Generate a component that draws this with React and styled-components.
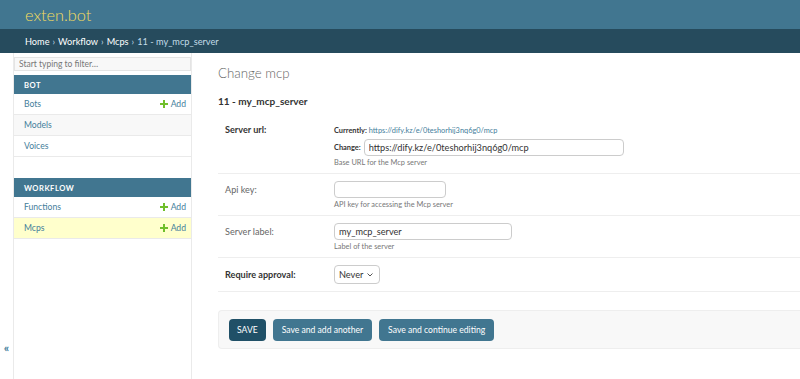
import React from 'react';
import styled, { createGlobalStyle } from 'styled-components';

const GlobalStyle = createGlobalStyle`
  html, body { margin: 0; padding: 0; background: #fff; }
  body {
    font-family: Lato, "Liberation Sans", Arial, sans-serif;
    color: #333;
    font-size: 9.1px;
  }
  * { box-sizing: border-box; }
`;

const Header = styled.header`
  height: 29px;
  background: #417690;
  display: flex;
  align-items: center;
  padding: 0 25px;
`;

const Brand = styled.div`
  font-size: 16.3px;
  font-weight: 300;
  color: #f5dd5d;
`;

const Breadcrumbs = styled.nav`
  height: 24px;
  background: #264b5d;
  display: flex;
  align-items: center;
  gap: 3px;
  padding: 0 25px;
  font-size: 9.2px;
  color: #c4dce8;
`;

const Crumb = styled.a`
  color: #fff;
  text-decoration: none;
`;

const Main = styled.div`
  display: flex;
  min-height: calc(100vh - 53px);
`;

const Toggle = styled.div`
  flex: 0 0 14px;
  border-right: 1px solid #eaeaea;
  display: flex;
  flex-direction: column;
  justify-content: flex-end;
  align-items: center;
  padding-bottom: 24px;
  color: #447e9b;
  font-size: 12px;
  font-weight: bold;
`;

const Sidebar = styled.aside`
  flex: 0 0 178px;
  border-right: 1px solid #eaeaea;
  padding-top: 4px;
`;

const Filter = styled.input`
  display: block;
  width: 100%;
  height: 14px;
  margin: 0 0 4px;
  padding: 0 4px;
  border: 1px solid #e4e4e4;
  background: #f8f8f8;
  font-family: inherit;
  font-size: 8.5px;
  color: #333;
  &::placeholder { color: #777; }
`;

const Module = styled.div`
  margin-bottom: 21px;
`;

const Caption = styled.div`
  height: 19px;
  background: #417690;
  color: #fff;
  display: flex;
  align-items: center;
  padding-left: 10px;
  font-size: 7.6px;
  font-weight: bold;
  letter-spacing: 0.5px;
  text-transform: uppercase;
`;

const NavRow = styled.div`
  height: 21px;
  display: flex;
  align-items: center;
  justify-content: space-between;
  padding: 0 5px 0 10px;
  border-bottom: 1px solid #eaeaea;
  background: ${p => (p.$current ? '#ffffcc' : p.$alt ? '#f8f8f8' : '#fff')};
`;

const NavLink = styled.a`
  color: #447e9b;
  font-size: 8.6px;
  text-decoration: none;
`;

const AddLink = styled.a`
  display: flex;
  align-items: center;
  gap: 3px;
  color: #447e9b;
  font-size: 8.6px;
  text-decoration: none;
`;

const PlusIcon = () => (
  <svg width="8" height="8" viewBox="0 0 8 8" aria-hidden="true">
    <rect x="3" y="0" width="2" height="8" fill="#70bf2b" />
    <rect x="0" y="3" width="8" height="2" fill="#70bf2b" />
  </svg>
);

const Content = styled.main`
  flex: 1;
  min-width: 0;
  padding: 12px 0 0 26px;
`;

const Title = styled.h1`
  margin: 0 0 14px;
  font-size: 13.3px;
  line-height: 16px;
  font-weight: 300;
  color: #666;
`;

const Subtitle = styled.h2`
  margin: 0 0 8px;
  font-size: 10px;
  line-height: 12px;
  font-weight: bold;
  color: #333;
`;

const FormRow = styled.div`
  display: flex;
  padding: 7px 7px ${p => p.$pb ?? 6}px;
  border-bottom: 1px solid #eee;
`;

const Label = styled.label`
  flex: 0 0 109px;
  padding-top: ${p => p.$pt ?? 3}px;
  font-size: 9.1px;
  line-height: 11px;
  font-weight: ${p => (p.$required ? 'bold' : 'normal')};
  color: ${p => (p.$required ? '#333' : '#666')};
`;

const Field = styled.div`
  display: flex;
  flex-direction: column;
  align-items: flex-start;
`;

const Currently = styled.div`
  font-size: 7.4px;
  line-height: 11px;
  margin-top: 3px;
  b { color: #333; }
  a { color: #447e9b; text-decoration: none; }
`;

const ChangeLine = styled.div`
  display: flex;
  align-items: center;
  gap: 3px;
  margin-top: 3px;
  font-size: 7.4px;
  font-weight: bold;
  color: #333;
`;

const Input = styled.input`
  width: ${p => p.$w}px;
  height: 17px;
  padding: 0 4px;
  border: 1px solid #ccc;
  border-radius: 4px;
  font-family: inherit;
  font-size: 9.2px;
  color: #333;
  background: #fff;
`;

const Help = styled.div`
  margin-top: 2px;
  font-size: 7.4px;
  line-height: 9px;
  color: #777;
`;

const SelectWrap = styled.div`
  position: relative;
  width: 46px;
  height: 19px;
`;

const Select = styled.select`
  appearance: none;
  width: 100%;
  height: 100%;
  padding: 0 4px;
  border: 1px solid #ccc;
  border-radius: 4px;
  background: #fff;
  font-family: inherit;
  font-size: 9.2px;
  color: #333;
`;

const Chevron = styled.svg`
  position: absolute;
  right: 7px;
  top: 8px;
  pointer-events: none;
`;

const SubmitRow = styled.div`
  margin-top: 18px;
  display: flex;
  gap: 7px;
  padding: 8px 10px 7px;
  background: #f8f8f8;
  border: 1px solid #eee;
  border-right: none;
  border-radius: 4px 0 0 4px;
`;

const Button = styled.button`
  height: 22px;
  padding: 0 ${p => (p.$primary ? 8 : 9)}px;
  border: none;
  border-radius: 4px;
  background: ${p => (p.$primary ? '#205067' : '#417690')};
  color: #fff;
  font-family: inherit;
  font-size: 8.6px;
  cursor: pointer;
`;

const modules = [
  {
    name: 'Bot',
    rows: [
      { name: 'Bots', add: true },
      { name: 'Models' },
      { name: 'Voices' },
    ],
  },
  {
    name: 'Workflow',
    rows: [
      { name: 'Functions', add: true },
      { name: 'Mcps', add: true, current: true },
    ],
  },
];

export default function App() {
  return (
    <>
      <GlobalStyle />
      <Header>
        <Brand>exten.bot</Brand>
      </Header>
      <Breadcrumbs>
        <Crumb href="#">Home</Crumb>
        <span>›</span>
        <Crumb href="#">Workflow</Crumb>
        <span>›</span>
        <Crumb href="#">Mcps</Crumb>
        <span>›</span>
        <span>11 - my_mcp_server</span>
      </Breadcrumbs>
      <Main>
        <Toggle>«</Toggle>
        <Sidebar>
          <Filter placeholder="Start typing to filter…" />
          {modules.map(m => (
            <Module key={m.name}>
              <Caption>{m.name}</Caption>
              {m.rows.map((r, i) => (
                <NavRow key={r.name} $alt={i === 1} $current={r.current}>
                  <NavLink href="#">{r.name}</NavLink>
                  {r.add && (
                    <AddLink href="#">
                      <PlusIcon />
                      Add
                    </AddLink>
                  )}
                </NavRow>
              ))}
            </Module>
          ))}
        </Sidebar>
        <Content>
          <Title>Change mcp</Title>
          <Subtitle>11 - my_mcp_server</Subtitle>
          <FormRow>
            <Label $required $pt={2}>Server url:</Label>
            <Field>
              <Currently>
                <b>Currently:</b> <a href="#">https://dify.kz/e/0teshorhij3nq6g0/mcp</a>
              </Currently>
              <ChangeLine>
                Change:
                <Input $w={260} defaultValue="https://dify.kz/e/0teshorhij3nq6g0/mcp" />
              </ChangeLine>
              <Help>Base URL for the Mcp server</Help>
            </Field>
          </FormRow>
          <FormRow>
            <Label>Api key:</Label>
            <Field>
              <Input $w={112} />
              <Help>API key for accessing the Mcp server</Help>
            </Field>
          </FormRow>
          <FormRow>
            <Label>Server label:</Label>
            <Field>
              <Input $w={178} defaultValue="my_mcp_server" />
              <Help>Label of the server</Help>
            </Field>
          </FormRow>
          <FormRow $pb={7}>
            <Label $required $pt={4}>Require approval:</Label>
            <Field>
              <SelectWrap>
                <Select defaultValue="never">
                  <option value="never">Never</option>
                  <option value="always">Always</option>
                </Select>
                <Chevron width="6" height="4" viewBox="0 0 6 4">
                  <path d="M0.5 0.5 L3 3 L5.5 0.5" fill="none" stroke="#555" strokeWidth="1" />
                </Chevron>
              </SelectWrap>
            </Field>
          </FormRow>
          <SubmitRow>
            <Button $primary>SAVE</Button>
            <Button>Save and add another</Button>
            <Button>Save and continue editing</Button>
          </SubmitRow>
        </Content>
      </Main>
    </>
  );
}
